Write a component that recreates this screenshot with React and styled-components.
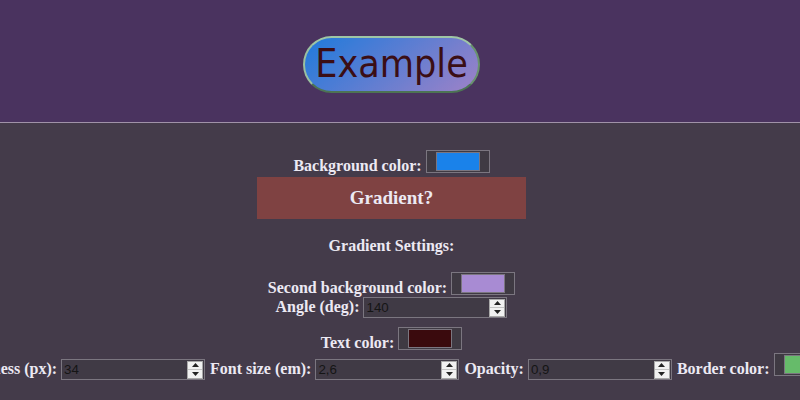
import React, { useState } from 'react';
import styled, { createGlobalStyle } from 'styled-components';

const GlobalStyle = createGlobalStyle`
  html, body {
    margin: 0;
    padding: 0;
    overflow: hidden;
    background: #443b4a;
  }

  body {
    font-family: "Liberation Serif", "Times New Roman", serif;
    color: #ece9f3;
  }
`;

const Header = styled.header`
  height: 123px;
  box-sizing: border-box;
  padding-right: 17px;
  display: flex;
  justify-content: center;
  align-items: center;
  background: #4a335f;
  border-bottom: 1px solid #a092a8;
`;

const Preview = styled.button`
  height: 57px;
  box-sizing: border-box;
  padding: 0 10px;
  margin-top: 6px;
  border: 2px solid;
  border-color: #a9d6ad #6d9e70 #4e7c53 #a4d0a8;
  border-radius: ${(p) => p.$radius}px;
  background: linear-gradient(${(p) => p.$angle}deg, ${(p) => p.$from}, ${(p) => p.$to});
  color: ${(p) => p.$color};
  opacity: ${(p) => p.$opacity};
  font-family: "DejaVu Sans", Verdana, sans-serif;
  font-stretch: condensed;
  font-size: calc(${(p) => p.$size}em * 0.94);
  line-height: 1;
  cursor: pointer;
`;

const Main = styled.main`
  padding-right: 17px;
  display: flex;
  flex-direction: column;
  align-items: center;
  overflow: hidden;
`;

const Row = styled.div`
  display: flex;
  justify-content: center;
  align-items: baseline;
  gap: 5px;
  width: 100%;
  margin-top: ${(p) => p.$top || 0}px;
  white-space: nowrap;
`;

const Field = styled.label`
  display: flex;
  align-items: baseline;
  gap: 4px;
  flex: none;
  font-size: 16px;
  font-weight: bold;
`;

const ColorInput = styled.input`
  width: 64px;
  height: 23px;
  box-sizing: border-box;
  padding: 1px 9px;
  margin: 0 0 -2px;
  border: 1px solid #7b7680;
  background: #3f3a43;
  cursor: pointer;

  &::-webkit-color-swatch-wrapper {
    padding: 0;
  }

  &::-webkit-color-swatch {
    border: 1px solid #7b7680;
    border-radius: 0;
  }
`;

const NumberBox = styled.span`
  display: inline-flex;
  align-items: center;
  width: 144px;
  height: 21px;
  box-sizing: border-box;
  padding: 0 1px 0 0;
  border: 1px solid #7b7680;
  background: #403a45;
`;

const NumberText = styled.input`
  flex: 1;
  min-width: 0;
  height: 19px;
  box-sizing: border-box;
  padding: 1px 2px;
  margin: 0;
  border: none;
  outline: none;
  background: transparent;
  color: #151515;
  font-family: "Liberation Sans", Arial, sans-serif;
  font-size: 13.33px;
`;

const Spinner = styled.span`
  display: flex;
  flex-direction: column;
  width: 16px;
  height: 18px;
  box-sizing: border-box;
  border: 1px solid #a9a9a9;
  background: #f1f1f1;
`;

const SpinHalf = styled.span`
  flex: 1;
  display: flex;
  align-items: center;
  justify-content: center;
  border-top: ${(p) => (p.$down ? '1px solid #c4c4c4' : 'none')};
  cursor: pointer;
`;

const Arrow = ({ down }) => (
  <svg width="7" height="4" viewBox="0 0 7 4">
    <path d={down ? 'M0 0h7L3.5 4z' : 'M3.5 0L7 4H0z'} fill="#222" />
  </svg>
);

const NumberField = ({ value, step, onChange }) => {
  const num = parseFloat(String(value).replace(',', '.')) || 0;
  const fmt = (v) => String(Math.round(v * 100) / 100).replace('.', ',');
  return (
    <NumberBox>
      <NumberText value={value} onChange={(e) => onChange(e.target.value)} />
      <Spinner>
        <SpinHalf onClick={() => onChange(fmt(num + step))}>
          <Arrow />
        </SpinHalf>
        <SpinHalf $down onClick={() => onChange(fmt(num - step))}>
          <Arrow down />
        </SpinHalf>
      </Spinner>
    </NumberBox>
  );
};

const GradientToggle = styled.button`
  width: 269px;
  height: 42px;
  margin: 2px 0 0;
  border: none;
  background: ${(p) => (p.$on ? '#5a7f42' : '#7f4242')};
  color: #ece9f3;
  font-family: "Liberation Serif", "Times New Roman", serif;
  font-size: 19px;
  font-weight: bold;
  cursor: pointer;
`;

const Heading = styled.div`
  margin-top: 18px;
  font-size: 16px;
  font-weight: bold;
`;

const toNum = (v) => parseFloat(String(v).replace(',', '.')) || 0;

export default function App() {
  const [bg, setBg] = useState('#1a82ea');
  const [bg2, setBg2] = useState('#a88bd3');
  const [angle, setAngle] = useState('140');
  const [text, setText] = useState('#3a0a0d');
  const [radius, setRadius] = useState('34');
  const [size, setSize] = useState('2,6');
  const [opacity, setOpacity] = useState('0,9');
  const [border, setBorder] = useState('#66bb6a');
  const [gradient, setGradient] = useState(false);

  return (
    <>
      <GlobalStyle />
      <Header>
        <Preview
          $radius={toNum(radius)}
          $angle={toNum(angle)}
          $from={bg}
          $to={bg2}
          $color={text}
          $opacity={toNum(opacity)}
          $size={toNum(size)}
        >
          Example
        </Preview>
      </Header>
      <Main>
        <Row $top={27}>
          <Field>
            Background color:
            <ColorInput type="color" value={bg} onChange={(e) => setBg(e.target.value)} />
          </Field>
        </Row>
        <GradientToggle $on={gradient} onClick={() => setGradient(!gradient)}>
          Gradient?
        </GradientToggle>
        <Heading>Gradient Settings:</Heading>
        <Row $top={17}>
          <Field>
            Second background color:
            <ColorInput type="color" value={bg2} onChange={(e) => setBg2(e.target.value)} />
          </Field>
        </Row>
        <Row $top={0}>
          <Field>
            Angle (deg):
            <NumberField value={angle} step={1} onChange={setAngle} />
          </Field>
        </Row>
        <Row $top={9}>
          <Field>
            Text color:
            <ColorInput type="color" value={text} onChange={(e) => setText(e.target.value)} />
          </Field>
        </Row>
        <Row $top={1}>
          <Field>
            Roundness (px):
            <NumberField value={radius} step={1} onChange={setRadius} />
          </Field>
          <Field>
            Font size (em):
            <NumberField value={size} step={0.1} onChange={setSize} />
          </Field>
          <Field>
            Opacity:
            <NumberField value={opacity} step={0.1} onChange={setOpacity} />
          </Field>
          <Field>
            Border color:
            <ColorInput type="color" value={border} onChange={(e) => setBorder(e.target.value)} />
          </Field>
        </Row>
      </Main>
    </>
  );
}
